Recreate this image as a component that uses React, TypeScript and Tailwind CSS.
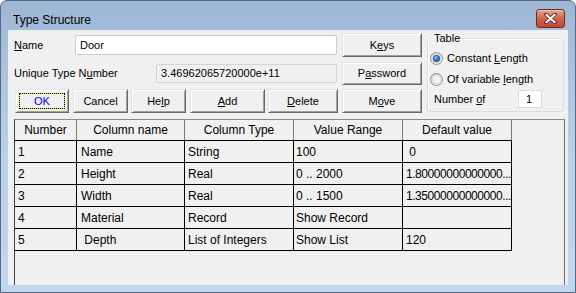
import React from "react";

const sans = "font-['Liberation_Sans',Arial,sans-serif]";

type BtnProps = {
  w: string;
  children: React.ReactNode;
  focus?: boolean;
};

function Btn({ w, children, focus }: BtnProps) {
  return (
    <div
      className={`relative h-full flex items-center justify-center bg-[#f0f0f0] border border-t-[#e3e3e3] border-l-[#e3e3e3] border-r-[#696969] border-b-[#696969] shadow-[inset_1px_1px_0_#ffffff,inset_-1px_-1px_0_#a0a0a0] text-[11px] ${focus ? "text-[#0000ff]" : "text-black"} ${w}`}
    >
      {focus && (
        <>
          <span className="absolute inset-[3px] border border-[#e8e800]" />
          <span className="absolute inset-[3px] border border-dotted border-black" />
        </>
      )}
      <span className="relative">{children}</span>
    </div>
  );
}

function Radio({ checked }: { checked?: boolean }) {
  return (
    <svg width="13" height="13" viewBox="0 0 13 13" className="shrink-0">
      <defs>
        <linearGradient id={checked ? "rg1" : "rg2"} x1="0" y1="0" x2="1" y2="1">
          <stop offset="0" stopColor="#d4d4d4" />
          <stop offset="1" stopColor="#fbfbfb" />
        </linearGradient>
        <radialGradient id="dot" cx="0.4" cy="0.35" r="0.7">
          <stop offset="0" stopColor="#8ccaf5" />
          <stop offset="0.5" stopColor="#2f7fc8" />
          <stop offset="1" stopColor="#164f8a" />
        </radialGradient>
      </defs>
      <circle cx="6.5" cy="6.5" r="6" fill={`url(#${checked ? "rg1" : "rg2"})`} stroke="#8f8f8f" />
      <circle cx="6.5" cy="6.5" r="4.3" fill="#f2f2f2" stroke="#d0d0d0" strokeWidth="0.8" />
      {checked && <circle cx="6.5" cy="6.5" r="3.3" fill="url(#dot)" stroke="#1a4f86" strokeWidth="0.6" />}
    </svg>
  );
}

const cols = ["w-[62px]", "w-[108px]", "w-[109px]", "w-[109px]", "w-[109px]"];
const pads = ["pl-[3px]", "pl-[4px]", "pl-[3px]", "pl-[2px]", "pl-[3px]"];
const headers = ["Number", "Column name", "Column Type", "Value Range", "Default value"];
const rows = [
  ["1", "Name", "String", "100", " 0"],
  ["2", "Height", "Real", "0 .. 2000", "1.80000000000000..."],
  ["3", "Width", "Real", "0 .. 1500", "1.35000000000000..."],
  ["4", "Material", "Record", "Show Record", ""],
  ["5", " Depth", "List of Integers", "Show List", "120"],
];

export default function App() {
  return (
    <div className={`w-[576px] h-[293px] ${sans} text-black`}>
      <div className="w-full h-full flex flex-col rounded-t-[7px] border border-[#566a84] bg-gradient-to-b from-[#9db7d5] via-[#b9cfe7] to-[#c2d7ed] overflow-hidden">
        {/* title bar */}
        <div className="h-[29px] flex items-start justify-between pl-[12px] pr-[10px] shrink-0">
          <span className="mt-[12px] text-[12px] leading-[14px]">Type Structure</span>
          <div className="mt-[8px] w-[29px] h-[19px] rounded-[3px] border border-[#6e2a22] bg-gradient-to-b from-[#e6a293] via-[#d0644f] to-[#c1432d] shadow-[inset_0_1px_0_#f3c6bb] flex items-center justify-center">
            <svg width="13" height="11" viewBox="0 0 13 11">
              <path d="M2 1.5 L11 9.5 M11 1.5 L2 9.5" stroke="#5a2a24" strokeWidth="3.6" strokeLinecap="round" />
              <path d="M2.3 1.8 L10.7 9.2 M10.7 1.8 L2.3 9.2" stroke="#ffffff" strokeWidth="2" strokeLinecap="round" />
            </svg>
          </div>
        </div>

        {/* client area */}
        <div className="mx-[7px] w-[560px] h-[255px] bg-[#f0f0f0] flex flex-col">
          <div className="flex">
            <div className="w-[414px] pt-[3px] flex flex-col">
              <div className="h-[24px] flex items-center">
                <span className="w-[67px] pl-[6px] text-[11px]">
                  <u>N</u>ame
                </span>
                <div className="w-[262px] h-[20px] bg-white border border-[#c9ccd2] rounded-[2px] flex items-center pl-[4px] text-[11px]">
                  Door
                </div>
                <div className="ml-[5px] h-full">
                  <Btn w="w-[80px]">
                    K<u>e</u>ys
                  </Btn>
                </div>
              </div>
              <div className="mt-[5px] h-[23px] flex items-center">
                <span className="w-[148px] pl-[6px] text-[11px]">
                  Unique Type N<u>u</u>mber
                </span>
                <div className="w-[181px] h-[19px] bg-[#f0f0f0] border border-[#d2d4d8] rounded-[2px] flex items-center pl-[4px] text-[11px]">
                  3.46962065720000e+11
                </div>
                <div className="ml-[5px] h-full">
                  <Btn w="w-[80px]">
                    P<u>a</u>ssword
                  </Btn>
                </div>
              </div>
              <div className="mt-[4px] h-[24px] flex pl-[7px]">
                <Btn w="w-[54px]" focus>
                  OK
                </Btn>
                <div className="ml-[4px] h-full">
                  <Btn w="w-[55px]">Cancel</Btn>
                </div>
                <div className="ml-[3px] h-full">
                  <Btn w="w-[55px]">
                    He<u>l</u>p
                  </Btn>
                </div>
                <div className="ml-[4px] h-full">
                  <Btn w="w-[75px]">
                    <u>A</u>dd
                  </Btn>
                </div>
                <div className="ml-[3px] h-full">
                  <Btn w="w-[70px]">
                    <u>D</u>elete
                  </Btn>
                </div>
                <div className="ml-[4px] h-full">
                  <Btn w="w-[80px]">
                    M<u>o</u>ve
                  </Btn>
                </div>
              </div>
            </div>

            {/* group box */}
            <div className="ml-[5px] mt-[8px] w-[137px] h-[74px] border border-[#d5dfe5] rounded-[3px] shadow-[inset_1px_1px_0_#ffffff] flex flex-col text-[11px]">
              <span className="-mt-[7px] ml-[5px] px-[1px] h-[13px] leading-[13px] w-fit bg-[#f0f0f0]">Table</span>
              <div className="mt-[5px] h-[16px] flex items-center pl-[2px]">
                <Radio checked />
                <span className="ml-[4px]">
                  Constant <u>L</u>ength
                </span>
              </div>
              <div className="mt-[5px] h-[16px] flex items-center pl-[2px]">
                <Radio />
                <span className="ml-[4px]">
                  Of variable <u>l</u>ength
                </span>
              </div>
              <div className="mt-[3px] h-[18px] flex items-center pl-[6px]">
                <span className="w-[84px]">
                  Number <u>o</u>f
                </span>
                <div className="w-[24px] h-[18px] bg-white border border-[#d8dbe0] flex items-center pl-[7px]">1</div>
              </div>
            </div>
          </div>

          {/* grid */}
          <div className="mt-[6px] ml-[6px] w-[551px] flex-1 border-l border-t border-r border-l-[#3c3c3c] border-t-[#8a8a8a] border-r-[#6d6d6d] flex flex-col text-[12px]">
            <div className="flex h-[21px]">
              {headers.map((h, i) => (
                <div
                  key={h}
                  className={`${cols[i]} h-full flex items-center justify-center border-r border-b border-r-[#7a7a7a] border-b-black`}
                >
                  {h}
                </div>
              ))}
            </div>
            {rows.map((r, ri) => (
              <div key={ri} className="flex h-[22px]">
                {r.map((c, i) => (
                  <div
                    key={i}
                    className={`${cols[i]} ${pads[i]} h-full flex items-center border-r border-b border-black whitespace-pre overflow-hidden ${c.endsWith("...") ? "tracking-[-0.45px] pl-[1px]" : ""}`}
                  >
                    {c}
                  </div>
                ))}
              </div>
            ))}
          </div>
        </div>
      </div>
    </div>
  );
}
